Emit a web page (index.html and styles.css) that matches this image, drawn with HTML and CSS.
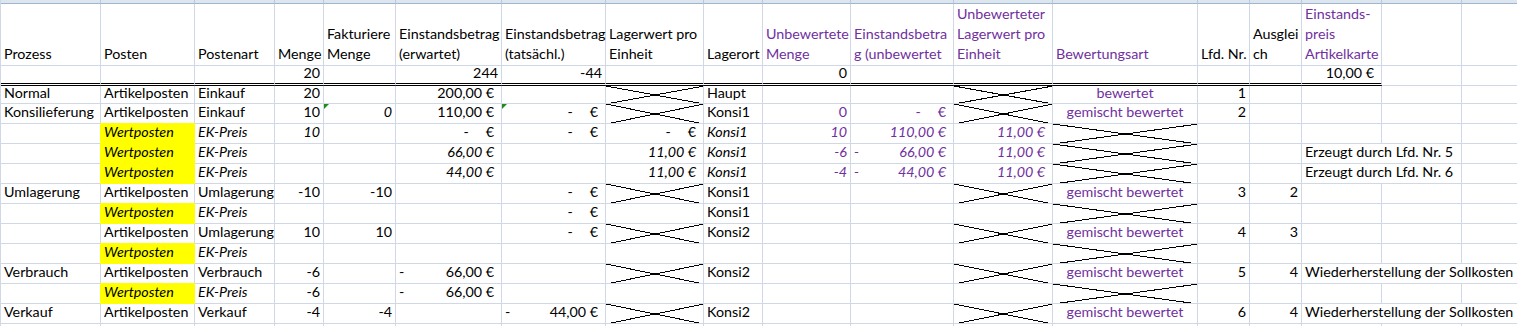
FILE: index.html
```html
<!DOCTYPE html>
<html lang="de">
<head>
<meta charset="utf-8">
<title>Bewertung Konsignation</title>
<link rel="stylesheet" href="styles.css">
</head>
<body>
<div class="sheet">
  <div class="row colhdr">
    <div class="c"></div><div class="c"></div><div class="c"></div><div class="c"></div><div class="c"></div><div class="c"></div>
    <div class="c"></div><div class="c"></div><div class="c"></div><div class="c"></div><div class="c"></div><div class="c"></div>
    <div class="c"></div><div class="c"></div><div class="c"></div><div class="c"></div><div class="c"></div><div class="c"></div>
  </div>

  <div class="row head">
    <div class="c"><span>Prozess</span></div>
    <div class="c"><span>Posten</span></div>
    <div class="c"><span>Postenart</span></div>
    <div class="c"><span>Menge</span></div>
    <div class="c"><span>Fakturiere<br>Menge</span></div>
    <div class="c"><span>Einstandsbetrag<br>(erwartet)</span></div>
    <div class="c"><span>Einstandsbetrag<br>(tatsächl.)</span></div>
    <div class="c"><span>Lagerwert pro<br>Einheit</span></div>
    <div class="c"><span>Lagerort</span></div>
    <div class="c p"><span>Unbewertete<br>Menge</span></div>
    <div class="c p"><span>Einstandsbetra<br>g (unbewertet</span></div>
    <div class="c p"><span>Unbewerteter<br>Lagerwert pro<br>Einheit</span></div>
    <div class="c p"><span>Bewertungsart</span></div>
    <div class="c"><span>Lfd. Nr.</span></div>
    <div class="c"><span>Ausglei<br>ch</span></div>
    <div class="c p"><span>Einstands-<br>preis<br>Artikelkarte</span></div>
    <div class="c"></div>
    <div class="c"></div>
  </div>

  <div class="row sum">
    <div class="c dbl"></div><div class="c dbl"></div><div class="c dbl"></div>
    <div class="c dbl r">20</div>
    <div class="c dbl"></div>
    <div class="c dbl r">244</div>
    <div class="c dbl r">-44</div>
    <div class="c dbl"></div><div class="c dbl"></div>
    <div class="c dbl r">0</div>
    <div class="c dbl"></div><div class="c dbl"></div><div class="c dbl"></div><div class="c dbl"></div><div class="c dbl"></div>
    <div class="c dbl r eur">10,00 €</div>
    <div class="c"></div><div class="c"></div>
  </div>

  <div class="row first">
    <div class="c">Normal</div>
    <div class="c">Artikelposten</div>
    <div class="c">Einkauf</div>
    <div class="c r">20</div>
    <div class="c"></div>
    <div class="c r eur">200,00 €</div>
    <div class="c"></div>
    <div class="c x"></div>
    <div class="c">Haupt</div>
    <div class="c"></div><div class="c"></div>
    <div class="c x"></div>
    <div class="c ctr p">bewertet</div>
    <div class="c r">1</div>
    <div class="c"></div><div class="c"></div><div class="c"></div><div class="c"></div>
  </div>

  <div class="row">
    <div class="c">Konsilieferung</div>
    <div class="c">Artikelposten</div>
    <div class="c">Einkauf</div>
    <div class="c r">10</div>
    <div class="c r i tri">0</div>
    <div class="c r eur">110,00 €</div>
    <div class="c r eur tri"><span class="dash">-</span>€</div>
    <div class="c x"></div>
    <div class="c">Konsi1</div>
    <div class="c r p">0</div>
    <div class="c r eur p"><span class="dash">-</span>€</div>
    <div class="c x"></div>
    <div class="c ctr p">gemischt bewertet</div>
    <div class="c r">2</div>
    <div class="c"></div><div class="c"></div><div class="c"></div><div class="c"></div>
  </div>

  <div class="row">
    <div class="c"></div>
    <div class="c y i">Wertposten</div>
    <div class="c i">EK-Preis</div>
    <div class="c r i">10</div>
    <div class="c"></div>
    <div class="c r eur"><span class="dash">-</span>€</div>
    <div class="c r eur"><span class="dash">-</span>€</div>
    <div class="c r eur"><span class="dash">-</span>€</div>
    <div class="c i">Konsi1</div>
    <div class="c r i p">10</div>
    <div class="c r eur i p">110,00 €</div>
    <div class="c r eur i p">11,00 €</div>
    <div class="c x"></div>
    <div class="c"></div><div class="c"></div><div class="c"></div><div class="c"></div><div class="c"></div>
  </div>

  <div class="row">
    <div class="c"></div>
    <div class="c y i">Wertposten</div>
    <div class="c i">EK-Preis</div>
    <div class="c"></div><div class="c"></div>
    <div class="c r eur i">66,00 €</div>
    <div class="c"></div>
    <div class="c r eur i">11,00 €</div>
    <div class="c i">Konsi1</div>
    <div class="c r i p">-6</div>
    <div class="c neg i p"><span>-</span><span>66,00 €</span></div>
    <div class="c r eur i p">11,00 €</div>
    <div class="c x"></div>
    <div class="c"></div><div class="c"></div>
    <div class="c span2">Erzeugt durch Lfd. Nr. 5</div>
    <div class="c"></div>
  </div>

  <div class="row">
    <div class="c"></div>
    <div class="c y i">Wertposten</div>
    <div class="c i">EK-Preis</div>
    <div class="c"></div><div class="c"></div>
    <div class="c r eur i">44,00 €</div>
    <div class="c"></div>
    <div class="c r eur i">11,00 €</div>
    <div class="c i">Konsi1</div>
    <div class="c r i p">-4</div>
    <div class="c neg i p"><span>-</span><span>44,00 €</span></div>
    <div class="c r eur i p">11,00 €</div>
    <div class="c x"></div>
    <div class="c"></div><div class="c"></div>
    <div class="c span2">Erzeugt durch Lfd. Nr. 6</div>
    <div class="c"></div>
  </div>

  <div class="row">
    <div class="c">Umlagerung</div>
    <div class="c">Artikelposten</div>
    <div class="c">Umlagerung</div>
    <div class="c r">-10</div>
    <div class="c r">-10</div>
    <div class="c"></div>
    <div class="c r eur"><span class="dash">-</span>€</div>
    <div class="c x"></div>
    <div class="c">Konsi1</div>
    <div class="c"></div><div class="c"></div>
    <div class="c x"></div>
    <div class="c ctr p">gemischt bewertet</div>
    <div class="c r">3</div>
    <div class="c r">2</div>
    <div class="c"></div><div class="c"></div><div class="c"></div>
  </div>

  <div class="row">
    <div class="c"></div>
    <div class="c y i">Wertposten</div>
    <div class="c i">EK-Preis</div>
    <div class="c"></div><div class="c"></div><div class="c"></div>
    <div class="c r eur"><span class="dash">-</span>€</div>
    <div class="c"></div>
    <div class="c">Konsi1</div>
    <div class="c"></div><div class="c"></div><div class="c"></div>
    <div class="c x"></div>
    <div class="c"></div><div class="c"></div><div class="c"></div><div class="c"></div><div class="c"></div>
  </div>

  <div class="row">
    <div class="c"></div>
    <div class="c">Artikelposten</div>
    <div class="c">Umlagerung</div>
    <div class="c r">10</div>
    <div class="c r">10</div>
    <div class="c"></div>
    <div class="c r eur"><span class="dash">-</span>€</div>
    <div class="c x"></div>
    <div class="c">Konsi2</div>
    <div class="c"></div><div class="c"></div>
    <div class="c x"></div>
    <div class="c ctr p">gemischt bewertet</div>
    <div class="c r">4</div>
    <div class="c r">3</div>
    <div class="c"></div><div class="c"></div><div class="c"></div>
  </div>

  <div class="row">
    <div class="c"></div>
    <div class="c y i">Wertposten</div>
    <div class="c i">EK-Preis</div>
    <div class="c"></div><div class="c"></div><div class="c"></div><div class="c"></div><div class="c"></div>
    <div class="c"></div><div class="c"></div><div class="c"></div><div class="c"></div>
    <div class="c x"></div>
    <div class="c"></div><div class="c"></div><div class="c"></div><div class="c"></div><div class="c"></div>
  </div>

  <div class="row">
    <div class="c">Verbrauch</div>
    <div class="c">Artikelposten</div>
    <div class="c">Verbrauch</div>
    <div class="c r">-6</div>
    <div class="c"></div>
    <div class="c neg"><span>-</span><span>66,00 €</span></div>
    <div class="c"></div>
    <div class="c x"></div>
    <div class="c">Konsi2</div>
    <div class="c"></div><div class="c"></div>
    <div class="c x"></div>
    <div class="c ctr p">gemischt bewertet</div>
    <div class="c r">5</div>
    <div class="c r">4</div>
    <div class="c span3">Wiederherstellung der Sollkosten</div>
  </div>

  <div class="row">
    <div class="c"></div>
    <div class="c y i">Wertposten</div>
    <div class="c i">EK-Preis</div>
    <div class="c r">-6</div>
    <div class="c"></div>
    <div class="c neg"><span>-</span><span>66,00 €</span></div>
    <div class="c"></div><div class="c"></div><div class="c"></div><div class="c"></div><div class="c"></div><div class="c"></div>
    <div class="c x"></div>
    <div class="c"></div><div class="c"></div><div class="c"></div><div class="c"></div><div class="c"></div>
  </div>

  <div class="row">
    <div class="c">Verkauf</div>
    <div class="c">Artikelposten</div>
    <div class="c">Verkauf</div>
    <div class="c r">-4</div>
    <div class="c r">-4</div>
    <div class="c"></div>
    <div class="c neg"><span>-</span><span>44,00 €</span></div>
    <div class="c x"></div>
    <div class="c">Konsi2</div>
    <div class="c"></div><div class="c"></div>
    <div class="c x"></div>
    <div class="c ctr p">gemischt bewertet</div>
    <div class="c r">6</div>
    <div class="c r">4</div>
    <div class="c span3">Wiederherstellung der Sollkosten</div>
  </div>

  <div class="row">
    <div class="c"></div><div class="c"></div><div class="c"></div><div class="c"></div><div class="c"></div><div class="c"></div>
    <div class="c"></div><div class="c"></div><div class="c"></div><div class="c"></div><div class="c"></div><div class="c"></div>
    <div class="c"></div><div class="c"></div><div class="c"></div><div class="c"></div><div class="c"></div><div class="c"></div>
  </div>
</div>
</body>
</html>
```

FILE: styles.css
```css
html, body {
  margin: 0;
  padding: 0;
  overflow: hidden;
  background: #fff;
}

body {
  font-family: Lato, "Liberation Sans", sans-serif;
  font-size: 14.3px;
  color: #000;
}

.sheet {
  width: 1541px;
  border-left: 1px solid #d0d7e5;
}

.row {
  display: grid;
  grid-template-columns: 100px 94px 80px 49px 72px 106px 104px 98px 59px 88px 103px 99px 145px 52px 52px 80px 80px 80px;
  height: 20px;
}

.c {
  box-sizing: border-box;
  display: flex;
  align-items: flex-end;
  min-width: 0;
  padding: 0 3px 3px;
  border-right: 1px solid #d0d7e5;
  border-bottom: 1px solid #d0d7e5;
  line-height: 16px;
  white-space: nowrap;
}

/* Excel column header remnant at the very top */
.colhdr {
  height: 4px;
}
.colhdr .c {
  padding: 0;
  background: #dde5ef;
  border-right-color: #b9c8da;
  border-bottom-color: #9eb6ce;
}

.head {
  height: 62px;
}
.head .c {
  line-height: 20px;
  padding-bottom: 1px;
}

.sum .c {
  line-height: 13px;
  padding-bottom: 4px;
}
.sum .dbl {
  border-bottom: 3px double #000;
}

.first {
  height: 18px;
}
.first .c {
  line-height: 13px;
  padding-bottom: 4px;
}

.r { justify-content: flex-end; }
.ctr { justify-content: center; }
.eur { padding-right: 7px; }
.neg { justify-content: space-between; padding-right: 7px; }
.i { font-style: italic; }
.p { color: #7030a0; }

.dash { margin-right: 17px; }

.y {
  background: #ffff00;
  border-color: #ffff00;
  box-shadow: -1px 0 0 #ffff00, 0 -1px 0 #ffff00, -1px -1px 0 #ffff00;
}

.x {
  background-image:
    linear-gradient(to top right, transparent calc(50% - 0.5px), #000 calc(50% - 0.5px), #000 calc(50% + 0.5px), transparent calc(50% + 0.5px)),
    linear-gradient(to bottom right, transparent calc(50% - 0.5px), #000 calc(50% - 0.5px), #000 calc(50% + 0.5px), transparent calc(50% + 0.5px));
  background-origin: border-box;
  background-repeat: no-repeat;
}

.tri { position: relative; }
.tri::before {
  content: "";
  position: absolute;
  left: 0;
  top: 0;
  border-top: 5px solid #1f8a1f;
  border-right: 5px solid transparent;
}

.span2 { grid-column: span 2; }
.span3 { grid-column: span 3; }
```
